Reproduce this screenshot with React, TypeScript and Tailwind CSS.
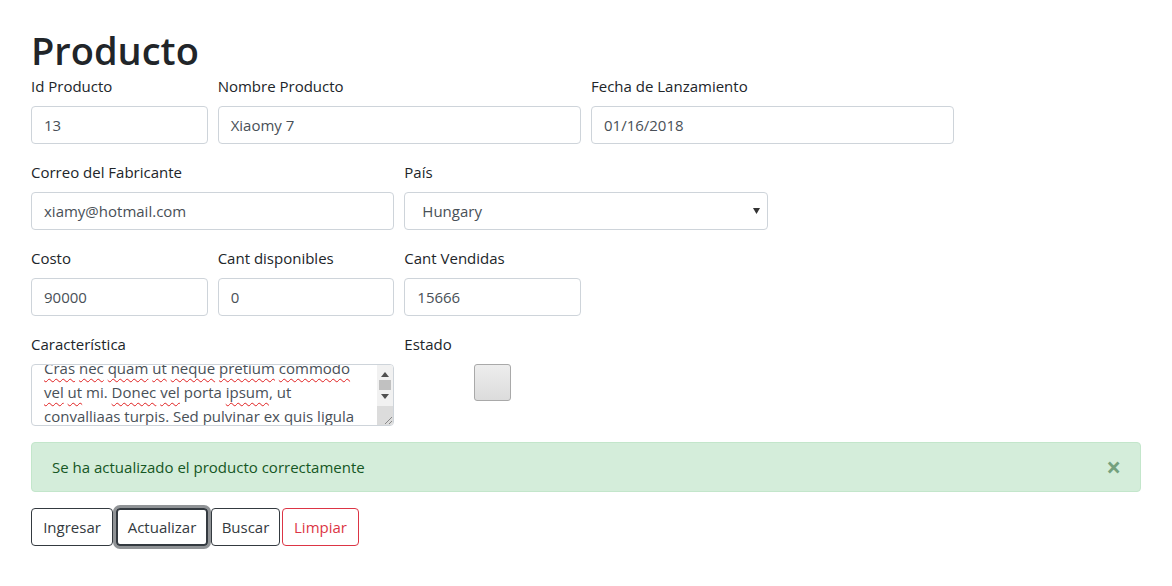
import * as React from "react"

const labelCls = "block mb-2 text-[15px] leading-6 text-[#212529]"
const inputCls =
  "flex items-center h-[38px] w-full px-3 border border-[#ced4da] rounded-[4px] bg-white text-[15px] text-[#495057]"

function Field({ label, value, span }: { label: string; value: string; span: string }) {
  return (
    <div className={`${span} px-[5px] mb-4`}>
      <label className={labelCls}>{label}</label>
      <div className={inputCls}>{value}</div>
    </div>
  )
}

function W({ children }: { children: React.ReactNode }) {
  return <span className="underline decoration-wavy decoration-[#e02020] decoration-1 underline-offset-[4px]">{children}</span>
}

export default function App() {
  return (
    <div className="bg-white min-h-[586px] font-['Open_Sans',sans-serif]">
      <div className="mx-auto w-[1140px] px-[15px] pt-[26px]">
        <h1 className="text-[38px] leading-[48px] font-semibold text-[#212529] mb-0">Producto</h1>

        <div className="flex -mx-[5px]">
          <Field span="w-1/6" label="Id Producto" value="13" />
          <Field span="w-1/3" label="Nombre Producto" value="Xiaomy 7" />
          <Field span="w-1/3" label="Fecha de Lanzamiento" value="01/16/2018" />
        </div>

        <div className="flex -mx-[5px]">
          <Field span="w-1/3" label="Correo del Fabricante" value="xiamy@hotmail.com" />
          <div className="w-1/3 px-[5px] mb-4">
            <label className={labelCls}>País</label>
            <div className={`${inputCls} pl-[17px] justify-between pr-[7px]`}>
              <span>Hungary</span>
              <svg width="7" height="6" viewBox="0 0 7 6">
                <polygon points="0,0 7,0 3.5,6" fill="#333" />
              </svg>
            </div>
          </div>
        </div>

        <div className="flex -mx-[5px]">
          <Field span="w-1/6" label="Costo" value="90000" />
          <Field span="w-1/6" label="Cant disponibles" value="0" />
          <Field span="w-1/6" label="Cant Vendidas" value="15666" />
        </div>

        <div className="flex -mx-[5px]">
          <div className="w-1/3 px-[5px] mb-4">
            <label className={labelCls}>Característica</label>
            <div className="relative h-[62px] border border-[#ced4da] rounded-[4px] overflow-hidden bg-white">
              <div className="pl-3 pr-5 -mt-[9px] text-[15px] leading-6 text-[#495057] whitespace-nowrap">
                <div><W>Cras</W> <W>nec</W> <W>quam</W> <W>ut</W> <W>neque</W> <W>pretium</W> <W>commodo</W></div>
                <div><W>vel</W> <W>ut</W> mi. <W>Donec</W> <W>vel</W> porta <W>ipsum</W>, ut</div>
                <div><W>convalliaas</W> <W>turpis</W>. Sed <W>pulvinar</W> ex <W>quis</W> <W>ligula</W></div>
              </div>
              <div className="absolute right-0 top-0 bottom-0 w-[16px] bg-[#f1f1f1] flex flex-col items-center">
                <svg className="mt-[7px]" width="8" height="5" viewBox="0 0 8 5">
                  <polygon points="0,5 8,5 4,0" fill="#505050" />
                </svg>
                <div className="mt-[3px] w-[12px] h-[10px] bg-[#c1c1c1]" />
                <svg className="mt-[4px]" width="8" height="5" viewBox="0 0 8 5">
                  <polygon points="0,0 8,0 4,5" fill="#505050" />
                </svg>
                <div className="mt-auto w-full h-[19px] bg-[#dcdcdc] flex items-end justify-end">
                  <svg width="10" height="10" viewBox="0 0 10 10">
                    <line x1="9" y1="2" x2="2" y2="9" stroke="#888" strokeWidth="1" />
                    <line x1="9" y1="6" x2="6" y2="9" stroke="#888" strokeWidth="1" />
                  </svg>
                </div>
              </div>
            </div>
          </div>
          <div className="w-1/6 px-[5px] mb-4">
            <label className={labelCls}>Estado</label>
            <div className="flex justify-center">
              <div className="w-[37px] h-[37px] rounded-[3px] border border-[#a9a9a9] bg-gradient-to-b from-[#ededed] to-[#dcdcdc]" />
            </div>
          </div>
        </div>

        <div className="flex items-center justify-between h-[50px] px-5 mb-4 bg-[#d4edda] border border-[#c3e6cb] rounded-[4px] text-[#155724] text-[15px]">
          <span>Se ha actualizado el producto correctamente</span>
          <span className="text-[26px] leading-none font-bold text-[#155724] opacity-50 mr-[-1px]">×</span>
        </div>

        <div className="flex items-center text-[15px]">
          <button className="h-[38px] w-[82px] border border-[#343a40] rounded-[4px] text-[#343a40]">Ingresar</button>
          <button className="h-[38px] w-[92px] ml-[3px] border-2 border-[#343a40] rounded-[4px] text-[#343a40] shadow-[0_0_0_3px_rgba(52,58,64,0.55)]">Actualizar</button>
          <button className="h-[38px] w-[69px] ml-[3px] border border-[#343a40] rounded-[4px] text-[#343a40]">Buscar</button>
          <button className="h-[38px] w-[77px] ml-[2px] border border-[#dc3545] rounded-[4px] text-[#dc3545]">Limpiar</button>
        </div>
      </div>
    </div>
  )
}
